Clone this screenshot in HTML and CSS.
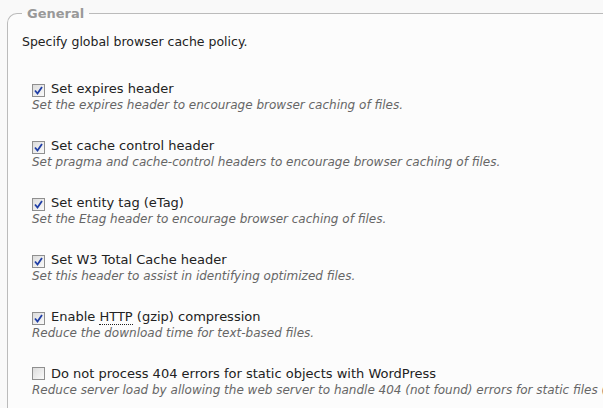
FILE: index.html
```html
<!DOCTYPE html>
<html lang="en">
<head>
  <meta charset="UTF-8">
  <title>Browser Cache</title>
  <link rel="stylesheet" href="styles.css">
</head>
<body>
  <fieldset class="grupo">
    <legend>General</legend>
    <p class="intro">Specify global browser cache policy.</p>

    <div class="opcion">
      <label><span class="check on"><svg width="9" height="9" viewBox="0 0 9 9"><path d="M1 4.5 L3.5 7.5 L8 1" fill="none" stroke="#1f3ea6" stroke-width="1.8"/></svg></span>Set expires header</label>
      <p class="desc">Set the expires header to encourage browser caching of files.</p>
    </div>

    <div class="opcion">
      <label><span class="check on"><svg width="9" height="9" viewBox="0 0 9 9"><path d="M1 4.5 L3.5 7.5 L8 1" fill="none" stroke="#1f3ea6" stroke-width="1.8"/></svg></span>Set cache control header</label>
      <p class="desc">Set pragma and cache-control headers to encourage browser caching of files.</p>
    </div>

    <div class="opcion">
      <label><span class="check on"><svg width="9" height="9" viewBox="0 0 9 9"><path d="M1 4.5 L3.5 7.5 L8 1" fill="none" stroke="#1f3ea6" stroke-width="1.8"/></svg></span>Set entity tag (eTag)</label>
      <p class="desc">Set the Etag header to encourage browser caching of files.</p>
    </div>

    <div class="opcion">
      <label><span class="check on"><svg width="9" height="9" viewBox="0 0 9 9"><path d="M1 4.5 L3.5 7.5 L8 1" fill="none" stroke="#1f3ea6" stroke-width="1.8"/></svg></span>Set W3 Total Cache header</label>
      <p class="desc">Set this header to assist in identifying optimized files.</p>
    </div>

    <div class="opcion">
      <label><span class="check on"><svg width="9" height="9" viewBox="0 0 9 9"><path d="M1 4.5 L3.5 7.5 L8 1" fill="none" stroke="#1f3ea6" stroke-width="1.8"/></svg></span>Enable <abbr>HTTP</abbr> (gzip) compression</label>
      <p class="desc">Reduce the download time for text-based files.</p>
    </div>

    <div class="opcion">
      <label><span class="check"></span>Do not process 404 errors for static objects with WordPress</label>
      <p class="desc">Reduce server load by allowing the web server to handle 404 (not found) errors for static files (images etc).</p>
    </div>
  </fieldset>
</body>
</html>
```

FILE: styles.css
```css
body {
  margin: 0;
  background: #f9f9f9;
  font-family: "DejaVu Sans", Verdana, sans-serif;
  color: #222;
  overflow: hidden;
}
.grupo {
  margin: 6px -20px 0 7px;
  padding: 0 0 60px 14px;
  border: 1px solid #bbb;
  border-right: none;
  border-radius: 10px 0 0 0;
  background: #fcfcfc;
  white-space: nowrap;
}
.grupo legend {
  margin-left: 0;
  padding: 0 5px;
  font-size: 13px;
  font-weight: bold;
  color: #999;
}
.intro {
  margin: 13px 0 31px 0;
  font-size: 12.5px;
}
.opcion {
  margin: 0 0 24px 10px;
}
.opcion label {
  display: block;
  font-size: 13px;
  line-height: 18px;
}
.opcion abbr {
  text-decoration: none;
  border-bottom: 1px dotted #222;
}
.check {
  display: inline-flex;
  align-items: center;
  justify-content: center;
  vertical-align: -2px;
  box-sizing: border-box;
  width: 13px;
  height: 13px;
  margin-right: 6px;
  border: 1px solid #8f8f8f;
  background: linear-gradient(135deg, #dcdcdc, #fafafa);
}
.desc {
  margin: 0;
  font-size: 12px;
  line-height: 15px;
  font-style: italic;
  color: #666;
}
```
